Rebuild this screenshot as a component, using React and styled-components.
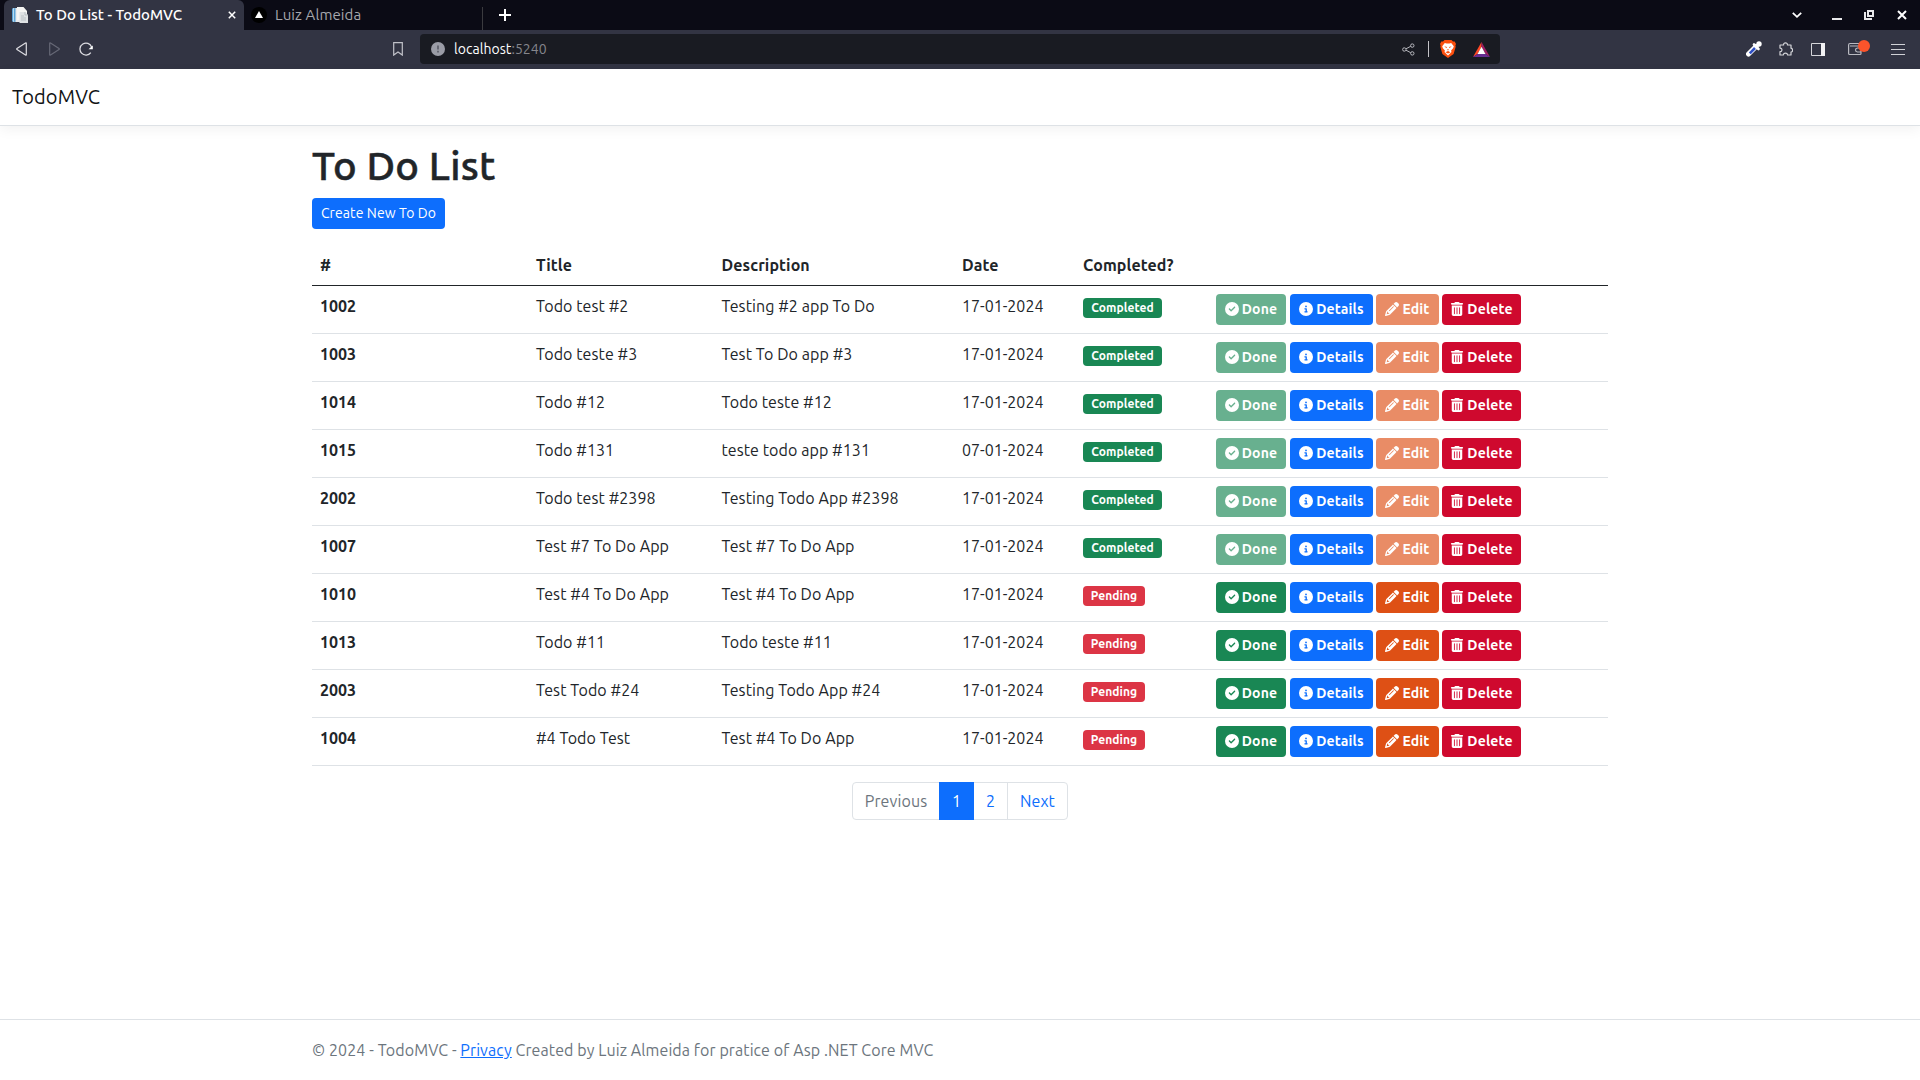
import React from 'react';
import styled, { createGlobalStyle } from 'styled-components';
import { FaCircleCheck, FaCircleInfo, FaPencil, FaTrashCan } from 'react-icons/fa6';

const GlobalStyle = createGlobalStyle`
  *, *::before, *::after { box-sizing: border-box; }
  body {
    margin: 0;
    background: #fff;
    color: #212529;
    font: 400 16px/24px Ubuntu, "Noto Sans", sans-serif;
    letter-spacing: 0.08px;
    overflow: hidden;
  }
  svg { display: block; flex: none; }
`;

const Page = styled.div`
  display: flex;
  flex-direction: column;
  height: 1080px;
`;

/* Browser chrome */
const TabStrip = styled.div`
  display: flex;
  align-items: center;
  height: 30px;
  padding: 0 13px 0 4px;
  background: #0b0b15;
  color: #fff;
`;

const Tab = styled.div`
  display: flex;
  align-items: center;
  gap: 8px;
  width: ${(p) => (p.$active ? 240 : 238)}px;
  height: 30px;
  padding: 0 8px ${(p) => (p.$active ? '0 8px' : '0 7px')};
  border-radius: 6px 6px 0 0;
  background: ${(p) => (p.$active ? '#323443' : 'transparent')};
  color: ${(p) => (p.$active ? '#fff' : '#a6a7ad')};
  font-size: 15px;
  font-weight: ${(p) => (p.$active ? 500 : 400)};
  letter-spacing: ${(p) => (p.$active ? 0 : 0.08)}px;
`;

const TabTitle = styled.span`
  flex: 1;
  white-space: nowrap;
`;

const TabDivider = styled.span`
  align-self: flex-end;
  width: 1px;
  height: 23px;
  background: #3b3b3f;
`;

const NewTab = styled.span`
  flex: 1;
  padding-left: 16px;
`;

const WindowControls = styled.div`
  display: flex;
  align-items: center;
`;

const ControlSlot = styled.span`
  display: flex;
  justify-content: flex-end;
  width: ${(p) => p.$width}px;
`;

const Toolbar = styled.div`
  display: flex;
  align-items: center;
  height: 39px;
  padding: 0 15px 1px;
  background: #323443;
`;

const NavButtons = styled.div`
  display: flex;
  align-items: center;
  gap: 18px;
  width: 378px;
`;

const AddressBar = styled.div`
  display: flex;
  align-items: center;
  width: 1080px;
  height: 30px;
  margin-left: 17px;
  padding: 0 10px 0 11px;
  border-radius: 4px;
  background: #191b22;
  font-size: 14px;
  letter-spacing: 0.05px;
`;

const Host = styled.span`
  margin-left: 9px;
  color: #fff;
`;

const Port = styled.span`
  flex: 1;
  color: #85868c;
`;

const AddressDivider = styled.span`
  width: 1px;
  height: 16px;
  margin: 0 11px 0 13px;
  background: #c4c4c8;
`;

const ShieldSlot = styled.span`
  margin-right: 17px;
`;

const Extensions = styled.div`
  display: flex;
  flex: 1;
  align-items: center;
  justify-content: flex-end;
`;

const ExtensionSlot = styled.div`
  margin-left: ${(p) => p.$gap}px;
`;

const WalletBadge = styled.div`
  position: relative;
  width: 22px;
  height: 14px;
  &::after {
    content: "";
    position: absolute;
    top: -2px;
    right: 0;
    width: 12px;
    height: 12px;
    border-radius: 50%;
    background: #fb542b;
  }
`;

/* Site */
const Navbar = styled.header`
  display: flex;
  align-items: center;
  height: 57px;
  margin-bottom: 16px;
  padding: 0 12px;
  border-bottom: 1px solid #dee2e6;
  box-shadow: 0 4px 12px rgba(0, 0, 0, 0.05);
`;

const Brand = styled.a`
  color: #111315;
  font-size: 20px;
  line-height: 30px;
  letter-spacing: 0.1px;
`;

const Main = styled.main`
  display: flex;
  flex: 1;
  flex-direction: column;
  align-items: flex-start;
  width: 1296px;
  margin: 0 auto;
`;

const Heading = styled.h1`
  margin: 0 0 8px;
  font-size: 40px;
  font-weight: 500;
  line-height: 48px;
  letter-spacing: 0.25px;
  -webkit-text-stroke: 0.5px;
`;

const CreateButton = styled.button`
  width: 133px;
  height: 31px;
  margin: 0 0 16px;
  padding: 0;
  border: 0;
  border-radius: 4px;
  background: #0d6efd;
  color: #fff;
  font: inherit;
  font-size: 14px;
  line-height: 21px;
  letter-spacing: 0.1px;
`;

const Table = styled.table`
  width: 100%;
  margin-bottom: 16px;
  border-spacing: 0;
  table-layout: fixed;
  text-align: left;
`;

const HeadCell = styled.th`
  width: ${(p) => p.$width}px;
  height: 41px;
  padding: 8px;
  border-bottom: 1px solid #212529;
  letter-spacing: 0.1px;
`;

const Cell = styled.td`
  height: 48px;
  padding: 8px;
  border-bottom: 1px solid #dee2e6;
  vertical-align: top;
  white-space: nowrap;
`;

const IdCell = styled(Cell)`
  font-weight: 700;
  letter-spacing: 0;
`;

const DateCell = styled(Cell)`
  letter-spacing: 0;
`;

const Badge = styled.span`
  display: flex;
  align-items: center;
  justify-content: center;
  width: ${(p) => (p.$done ? 79 : 62)}px;
  height: 20px;
  margin-top: 4px;
  border-radius: 4px;
  background: ${(p) => (p.$done ? '#198754' : '#dc3545')};
  color: #fff;
  font-size: 12px;
  font-weight: 700;
  line-height: 12px;
  letter-spacing: 0.08px;
`;

const Actions = styled.div`
  display: flex;
  gap: 3px;
`;

const ActionButton = styled.button`
  display: flex;
  align-items: center;
  justify-content: center;
  gap: 3px;
  width: ${(p) => p.$width}px;
  height: 31px;
  padding: 0;
  border: 0;
  border-radius: 4px;
  background: ${(p) => p.$color};
  color: #fff;
  font: inherit;
  font-size: 14px;
  font-weight: 700;
  line-height: 21px;
  letter-spacing: 0.15px;
  opacity: ${(p) => (p.disabled ? 0.65 : 1)};
  &:first-child { margin-right: 1px; }
  svg { margin-bottom: 1px; }
`;

const Pagination = styled.nav`
  display: flex;
  align-self: center;
  height: 38px;
  border: 1px solid #dee2e6;
  border-radius: 4px;
`;

const PageLink = styled.a`
  display: flex;
  align-items: center;
  justify-content: center;
  width: ${(p) => p.$width}px;
  margin: ${(p) => (p.$active ? '-1px 0' : '0')};
  border-left: ${(p) => (p.$divided ? '1px solid #dee2e6' : '0')};
  background: ${(p) => (p.$active ? '#0d6efd' : 'transparent')};
  color: ${(p) => (p.$active ? '#fff' : p.$muted ? '#6c757d' : '#0d6efd')};
  letter-spacing: 0.1px;
`;

const Footer = styled.footer`
  height: 61px;
  border-top: 1px solid #dee2e6;
  color: #6c757d;
  line-height: 60px;
`;

const FooterText = styled.div`
  width: 1296px;
  margin: 0 auto;
  letter-spacing: 0.085px;
`;

const PrivacyLink = styled.a`
  color: #0d6efd;
  text-decoration: underline;
`;

const DocsIcon = () => (
  <svg width="16" height="16" viewBox="0 0 16 16">
    <path d="M1 1h9v14H1z" fill="#e8ebee" />
    <path d="M0 1.5 3.5 1v14L0 14.5z" fill="#5ba3d6" />
    <path d="M1.5 1.2v13.5" stroke="#b9dbef" />
    <path d="M5 0h6.5L15 4v9H5z" fill="#f5f5f3" />
    <path d="M7.5 5H13l3 3v8H7.5z" fill="#dfe2e4" />
    <path d="M13 5v3h3M9 9h3M9 11h5M9 13h5" fill="none" stroke="#a9b1b8" strokeWidth=".7" />
  </svg>
);

const CloseIcon = ({ size, weight }) => (
  <svg width={size} height={size} viewBox="0 0 10 10">
    <path d="m1 1 8 8M9 1 1 9" stroke="#fff" strokeWidth={weight} />
  </svg>
);

const TriangleIcon = () => (
  <svg width="16" height="16" viewBox="0 0 16 16">
    <circle cx="8" cy="8" r="8" fill="#000" />
    <path d="m8 4 4 7H4z" fill="#fff" />
  </svg>
);

const PlusIcon = () => (
  <svg width="12" height="12" viewBox="0 0 12 12">
    <path d="M6 0v12M0 6h12" stroke="#fff" strokeWidth="2" />
  </svg>
);

const ChevronIcon = () => (
  <svg width="10" height="8" viewBox="0 0 10 8">
    <path d="m.8 1.8 4.2 4 4.2-4" fill="none" stroke="#fff" strokeWidth="1.8" />
  </svg>
);

const MinimizeIcon = () => (
  <svg width="10" height="10" viewBox="0 0 10 10">
    <path d="M0 8h10v2H0z" fill="#e8e8ea" />
  </svg>
);

const RestoreIcon = () => (
  <svg width="10" height="10" viewBox="0 0 10 10">
    <path d="M4 1h5v5H4zM1 2v7h7" fill="none" stroke="#e8e8ea" strokeWidth="2" />
  </svg>
);

const BackIcon = ({ flip, color }) => (
  <svg width="14" height="14" viewBox="0 0 14 14" transform={flip ? 'scale(-1 1)' : undefined}>
    <path d="M11.3 1.4v11.2q0 .9-.8.4L2 7.6q-.7-.6 0-1.2L10.5 1q.8-.5.8.4z" fill="none" stroke={color} strokeWidth="1.2" />
  </svg>
);

const ReloadIcon = () => (
  <svg width="14" height="14" viewBox="0 0 14 14">
    <path d="M11.8 10.7A6 6 0 1 1 12.6 5" fill="none" stroke="#dcdce1" strokeWidth="1.3" />
    <path d="M13.8 3.4v3.9H9.5z" fill="#fff" />
  </svg>
);

const BookmarkIcon = () => (
  <svg width="10" height="14" viewBox="0 0 10 14">
    <path d="M.7.7h8.6v12.4L5 10.1.7 13.1z" fill="none" stroke="#c0c1c8" strokeWidth="1.2" />
  </svg>
);

const SiteInfoIcon = () => (
  <svg width="14" height="14" viewBox="0 0 14 14">
    <circle cx="7" cy="7" r="7" fill="#9a9ca6" />
    <path d="M7 3.5v4M7 8.8v1.7" stroke="#5c5e6a" strokeWidth="1.7" />
  </svg>
);

const ShareIcon = () => (
  <svg width="13" height="13" viewBox="0 0 13 13">
    <g fill="none" stroke="#b6b7bd">
      <circle cx="2.3" cy="6.5" r="1.7" />
      <circle cx="10.3" cy="2.6" r="1.7" />
      <circle cx="10.3" cy="10.4" r="1.7" />
      <path d="m4 5.8 4.7-2.5M4 7.2l4.7 2.5" />
    </g>
  </svg>
);

const LionIcon = () => (
  <svg width="16" height="18" viewBox="0 0 16 18">
    <path d="M4.5 0h7L13 1.6l1.7-.1L16 4l-.6 1.5.3 1.2-2.1 7.3L8 18l-5.6-4L.3 6.700l.3-1.200L0 4l1.300-2.500 1.700.1z" fill="#fb4f0e" />
    <path d="m4.800 3.100 1.900.4h2.600l1.900-.4 2.600 3.200-.7 1.900-2 2.200.4 1.500-3.500 3.600-3.500-3.600.4-1.500-2-2.200-.7-1.900z" fill="#fff" />
    <path d="m4.300 6.200 2.600.7-.4 1.300zM11.700 6.200l-2.600.7.4 1.300zM7.300 9h1.400L8 11zM5.500 12.200 8 10.900l2.500 1.300L8 13.500z" fill="#fb4f0e" />
  </svg>
);

const RewardsIcon = () => (
  <svg width="17" height="15" viewBox="0 0 17 15">
    <path d="M8.500 0v5L4.500 12 0 15z" fill="#ff4724" />
    <path d="M8.500 0 17 15l-4.500-3-4-7z" fill="#9e1f63" />
    <path d="m0 15 4.500-3h8l4.500 3z" fill="#662d91" />
    <path d="m8.500 4.800 4 7.200h-8z" fill="#fff" />
  </svg>
);

const DropperIcon = () => (
  <svg width="16" height="16" viewBox="0 0 16 16">
    <path d="M10 5.500 2.500 13" stroke="#fff" strokeWidth="5" strokeLinecap="round" />
    <path d="M9 7 3.800 12.300" stroke="#2f4fc4" strokeWidth="2.600" />
    <path d="M8 3.500 12.500 8M10.500 5.500l3-3" stroke="#fff" strokeWidth="2.600" strokeLinecap="round" />
    <circle cx="13" cy="3" r="2.700" fill="#fff" />
  </svg>
);

const PuzzleIcon = () => (
  <svg width="14" height="14" viewBox="0 0 14 14">
    <path d="M1 3h3.600C4.200.2 8.800.2 8.400 3H12v3.200c2.200.5 2.200 3.500 0 4V13H8.600c-.3-2.400-4-2.400-4.300 0H1V9.700c2.600 0 2.600-3.600 0-3.600z" fill="none" stroke="#d5d6da" strokeWidth="1.200" strokeLinejoin="round" />
  </svg>
);

const SidebarIcon = () => (
  <svg width="14" height="13" viewBox="0 0 14 13">
    <path d="M.5.5h13v12H.5z" fill="none" stroke="#d5d6da" />
    <path d="M10 0h4v13h-4z" fill="#f2f2f4" />
  </svg>
);

const WalletIcon = () => (
  <svg width="14" height="14" viewBox="0 0 14 14">
    <path d="M13 4V1.500H2Q.6 1.500.6 3v8.500q0 1 1 1H12q1 0 1-1V10M2 4h11v6H9.500q-2-.2-2-2t2-2H13" fill="none" stroke="#b9bac1" strokeWidth="1.200" />
  </svg>
);

const MenuIcon = () => (
  <svg width="14" height="12" viewBox="0 0 14 12">
    <path d="M0 1.500h14M0 6.500h14M0 11.500h14" stroke="#d0d1d6" />
  </svg>
);

const columns = [
  ['#', 216],
  ['Title', 185.5],
  ['Description', 240.5],
  ['Date', 121],
  ['Completed?', 133],
  ['', 400],
];

const todos = [
  ['1002', 'Todo test #2', 'Testing #2 app To Do', '17-01-2024', true],
  ['1003', 'Todo teste #3', 'Test To Do app #3', '17-01-2024', true],
  ['1014', 'Todo #12', 'Todo teste #12', '17-01-2024', true],
  ['1015', 'Todo #131', 'teste todo app #131', '07-01-2024', true],
  ['2002', 'Todo test #2398', 'Testing Todo App #2398', '17-01-2024', true],
  ['1007', 'Test #7 To Do App', 'Test #7 To Do App', '17-01-2024', true],
  ['1010', 'Test #4 To Do App', 'Test #4 To Do App', '17-01-2024', false],
  ['1013', 'Todo #11', 'Todo teste #11', '17-01-2024', false],
  ['2003', 'Test Todo #24', 'Testing Todo App #24', '17-01-2024', false],
  ['1004', '#4 Todo Test', 'Test #4 To Do App', '17-01-2024', false],
];

const BrowserChrome = () => (
  <>
    <TabStrip>
      <Tab $active>
        <DocsIcon />
        <TabTitle>To Do List - TodoMVC</TabTitle>
        <CloseIcon size={8} weight={1.9} />
      </Tab>
      <Tab>
        <TriangleIcon />
        <TabTitle>Luiz Almeida</TabTitle>
      </Tab>
      <TabDivider />
      <NewTab><PlusIcon /></NewTab>
      <WindowControls>
        <ChevronIcon />
        <ControlSlot $width={40}><MinimizeIcon /></ControlSlot>
        <ControlSlot $width={32}><RestoreIcon /></ControlSlot>
        <ControlSlot $width={33}><CloseIcon size={10} weight={2} /></ControlSlot>
      </WindowControls>
    </TabStrip>
    <Toolbar>
      <NavButtons>
        <BackIcon color="#dcdce1" />
        <BackIcon flip color="#666876" />
        <ReloadIcon />
      </NavButtons>
      <BookmarkIcon />
      <AddressBar>
        <SiteInfoIcon />
        <Host>localhost</Host>
        <Port>:5240</Port>
        <ShareIcon />
        <AddressDivider />
        <ShieldSlot><LionIcon /></ShieldSlot>
        <RewardsIcon />
      </AddressBar>
      <Extensions>
        <DropperIcon />
        <ExtensionSlot $gap={17}><PuzzleIcon /></ExtensionSlot>
        <ExtensionSlot $gap={18}><SidebarIcon /></ExtensionSlot>
        <ExtensionSlot $gap={23}><WalletBadge><WalletIcon /></WalletBadge></ExtensionSlot>
        <ExtensionSlot $gap={21}><MenuIcon /></ExtensionSlot>
      </Extensions>
    </Toolbar>
  </>
);

const TodoRow = ({ todo: [id, title, description, date, done] }) => (
  <tr>
    <IdCell>{id}</IdCell>
    <Cell>{title}</Cell>
    <Cell>{description}</Cell>
    <DateCell>{date}</DateCell>
    <Cell><Badge $done={done}>{done ? 'Completed' : 'Pending'}</Badge></Cell>
    <Cell>
      <Actions>
        <ActionButton $width={70} $color="#198754" disabled={done}><FaCircleCheck />Done</ActionButton>
        <ActionButton $width={83} $color="#0d6efd"><FaCircleInfo />Details</ActionButton>
        <ActionButton $width={63} $color="#de5015" disabled={done}><FaPencil />Edit</ActionButton>
        <ActionButton $width={79} $color="#cf092e"><FaTrashCan />Delete</ActionButton>
      </Actions>
    </Cell>
  </tr>
);

export default function App() {
  return (
    <Page>
      <GlobalStyle />
      <BrowserChrome />
      <Navbar><Brand>TodoMVC</Brand></Navbar>
      <Main>
        <Heading>To Do List</Heading>
        <CreateButton>Create New To Do</CreateButton>
        <Table>
          <thead>
            <tr>{columns.map(([label, width]) => <HeadCell key={label} $width={width}>{label}</HeadCell>)}</tr>
          </thead>
          <tbody>{todos.map((todo) => <TodoRow key={todo[0]} todo={todo} />)}</tbody>
        </Table>
        <Pagination>
          <PageLink $width={86} $muted>Previous</PageLink>
          <PageLink $width={35} $active>1</PageLink>
          <PageLink $width={33}>2</PageLink>
          <PageLink $width={60} $divided>Next</PageLink>
        </Pagination>
      </Main>
      <Footer>
        <FooterText>© 2024 - TodoMVC - <PrivacyLink>Privacy</PrivacyLink> Created by Luiz Almeida for pratice of Asp .NET Core MVC</FooterText>
      </Footer>
    </Page>
  );
}
